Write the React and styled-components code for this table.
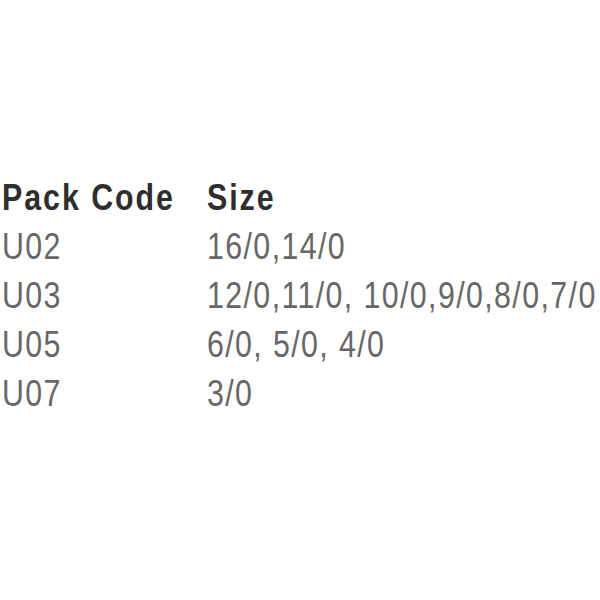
import styled, { createGlobalStyle } from 'styled-components';

const GlobalStyle = createGlobalStyle`
  html, body {
    margin: 0;
    padding: 0;
    background: #ffffff;
  }
`;

const rows = [
  { code: 'U02', size: '16/0,14/0' },
  { code: 'U03', size: '12/0,11/0, 10/0,9/0,8/0,7/0' },
  { code: 'U05', size: '6/0, 5/0, 4/0' },
  { code: 'U07', size: '3/0' },
];

export default function App() {
  return (
    <>
      <GlobalStyle />
      <Page>
        <Table>
          <HeadCell>Pack Code</HeadCell>
          <HeadCell>Size</HeadCell>
          {rows.map((r) => (
            <Row key={r.code}>
              <Cell>{r.code}</Cell>
              <Cell>{r.size}</Cell>
            </Row>
          ))}
        </Table>
      </Page>
    </>
  );
}

const Page = styled.div`
  width: 600px;
  height: 600px;
  box-sizing: border-box;
  padding: 173px 0 0 2px;
  background: #fff;
  overflow: hidden;
`;

const Table = styled.div`
  display: grid;
  grid-template-columns: 205px max-content;
  font-family: "Liberation Sans", Arial, sans-serif;
  font-size: 37px;
  line-height: 49px;
  white-space: nowrap;
`;

/* the source uses a condensed face; squeeze the regular one to match */
const BaseCell = styled.div`
  transform: scaleX(0.82);
  transform-origin: left center;
`;

const HeadCell = styled(BaseCell)`
  font-weight: bold;
  letter-spacing: 2.4px;
  color: #2e2e2e;
`;

const Row = styled.div`
  display: contents;
`;

const Cell = styled(BaseCell)`
  letter-spacing: 1.7px;
  color: #676767;
`;
